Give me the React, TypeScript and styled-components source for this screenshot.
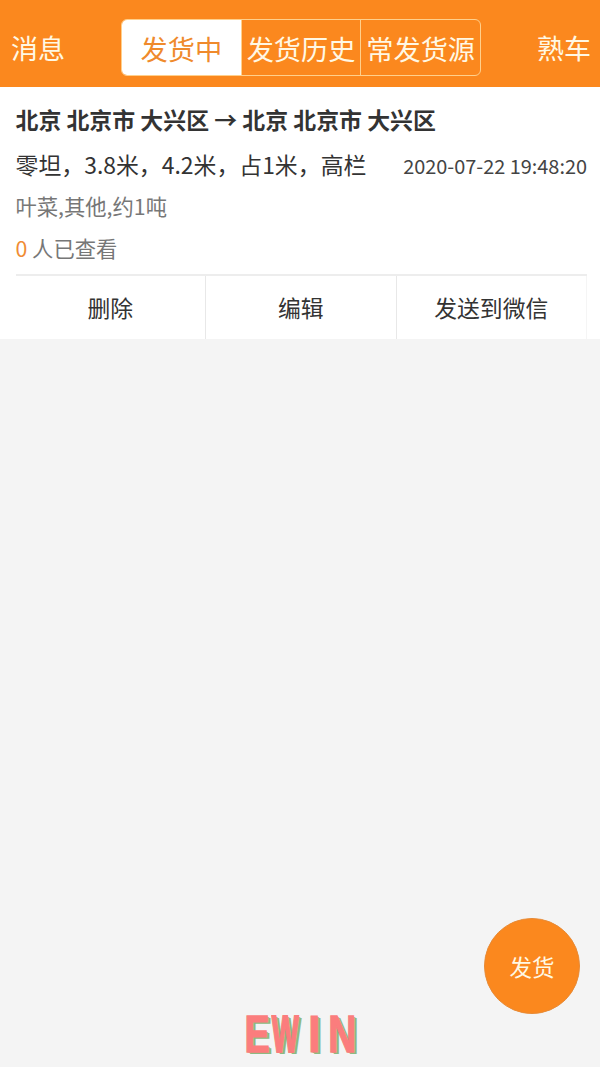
import React from "react";
import styled, { createGlobalStyle } from "styled-components";

const ORANGE = "#fb881e";

const GlobalStyle = createGlobalStyle`
  * { box-sizing: border-box; }
  body {
    margin: 0;
    background: #f4f4f4;
    font-family: "Noto Sans CJK SC", sans-serif;
    color: #333;
  }
`;

const Screen = styled.div`
  position: relative;
  width: 600px;
  height: 1067px;
  overflow: hidden;
  background: #f4f4f4;
`;

const Header = styled.header`
  display: flex;
  justify-content: space-between;
  align-items: flex-start;
  height: 87px;
  padding: 19px 9px 0 11px;
  background: ${ORANGE};
  color: #fff8e4;
`;

const HeaderLink = styled.a`
  font-size: 27px;
  line-height: 58px;
`;

const Segments = styled.nav`
  display: flex;
  width: 360px;
  height: 57px;
  border: 1px solid #ffd08c;
  border-radius: 6px;
  overflow: hidden;
`;

const Segment = styled.button<{ $active?: boolean }>`
  flex: 1 1 0;
  padding: 0;
  border: 0;
  border-right: 1px solid #ffd08c;
  background: ${(p) => (p.$active ? "#fff" : "transparent")};
  color: ${(p) => (p.$active ? "#ef8a2c" : "#fff8e4")};
  font: 27.2px/56px "Noto Sans CJK SC", sans-serif;
  white-space: nowrap;
  &:last-child { border-right: 0; }
`;

const Card = styled.article`
  height: 252px;
  padding: 11px 13px 0 15.5px;
  background: #fff;
`;

const Route = styled.h1`
  margin: 0;
  font-size: 22.9px;
  line-height: 42px;
  font-weight: 700;
  white-space: nowrap;
`;

const DetailRow = styled.div`
  display: flex;
  justify-content: space-between;
  align-items: flex-start;
  height: 45px;
  white-space: nowrap;
`;

const Vehicle = styled.span`
  font-size: 22.9px;
  line-height: 48px;
`;

const Time = styled.time`
  font-size: 19.9px;
  line-height: 52px;
  color: #444;
`;

const Note = styled.p`
  margin: 0;
  font-size: 21.3px;
  line-height: 42px;
  color: #777;
`;

const Count = styled.span`
  color: #f08c35;
`;

const Actions = styled.div`
  display: flex;
  height: 65px;
  margin-top: 5px;
  border-top: 2px solid #ededed;
`;

const Action = styled.button`
  flex: 1 1 0;
  padding: 0;
  border: 0;
  border-right: 1px solid #e8e8e8;
  background: transparent;
  color: #333;
  font: 22.8px/63px "Noto Sans CJK SC", sans-serif;
  &:last-child { border-right-color: #f5f5f5; }
`;

const PostButton = styled.button`
  position: absolute;
  left: 484px;
  top: 918px;
  width: 96px;
  height: 96px;
  padding: 0;
  border: 1px solid #e78a35;
  border-radius: 50%;
  background: ${ORANGE};
  color: #fff8e4;
  font: 22.5px/94px "Noto Sans CJK SC", sans-serif;
`;

const Watermark = styled.div`
  position: absolute;
  left: 243px;
  top: 1009px;
  display: flex;
  font: 700 51px/51px "Liberation Sans", sans-serif;
  color: #fb7d7d;
`;

const Letter = styled.span<{ $scale: number }>`
  display: flex;
  justify-content: center;
  width: 28.3px;
  transform: scaleX(${(p) => p.$scale});
  -webkit-text-stroke: ${(p) => 1 / p.$scale}px #fb7d7d;
  text-shadow:
    ${(p) => 1.5 / p.$scale}px 1px 0 #8dba82,
    ${(p) => 3 / p.$scale}px 2px 0 #8dba82;
`;

export default function App() {
  return (
    <>
      <GlobalStyle />
      <Screen>
        <Header>
          <HeaderLink>消息</HeaderLink>
          <Segments>
            <Segment $active>发货中</Segment>
            <Segment>发货历史</Segment>
            <Segment>常发货源</Segment>
          </Segments>
          <HeaderLink>熟车</HeaderLink>
        </Header>
        <Card>
          <Route>北京 北京市 大兴区 → 北京 北京市 大兴区</Route>
          <DetailRow>
            <Vehicle>零坦，3.8米，4.2米，占1米，高栏</Vehicle>
            <Time>2020-07-22 19:48:20</Time>
          </DetailRow>
          <Note>叶菜,其他,约1吨</Note>
          <Note><Count>0</Count> 人已查看</Note>
          <Actions>
            <Action>删除</Action>
            <Action>编辑</Action>
            <Action>发送到微信</Action>
          </Actions>
        </Card>
        <PostButton>发货</PostButton>
        <Watermark>
          <Letter $scale={0.74}>E</Letter>
          <Letter $scale={0.56}>W</Letter>
          <Letter $scale={0.85}>I</Letter>
          <Letter $scale={0.76}>N</Letter>
        </Watermark>
      </Screen>
    </>
  );
}
